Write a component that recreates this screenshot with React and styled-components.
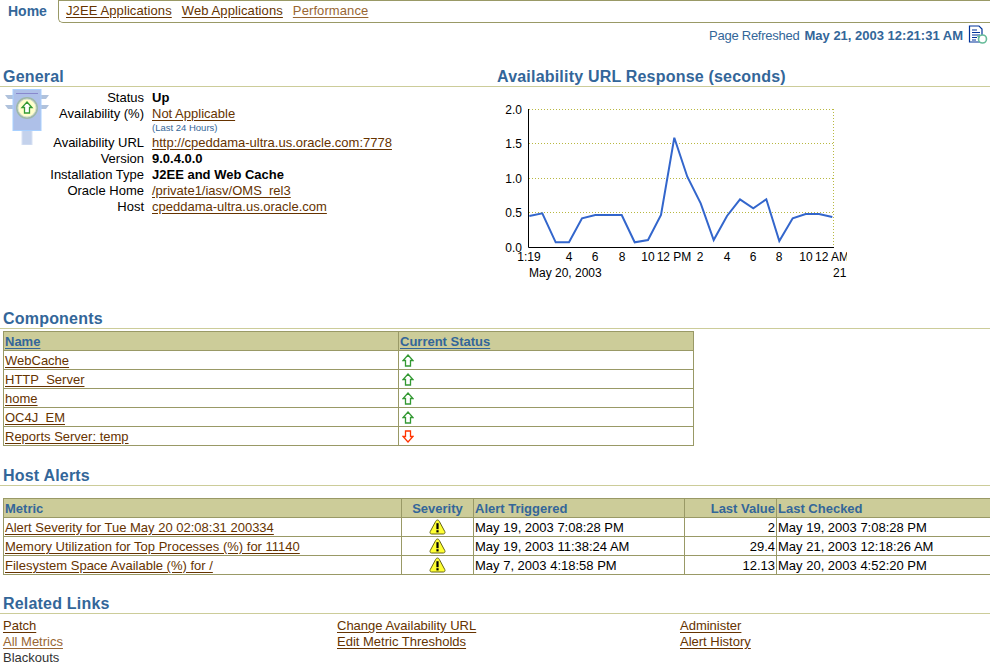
import React from "react";
import styled, { createGlobalStyle } from "styled-components";

const GlobalStyle = createGlobalStyle`
  html, body {
    margin: 0;
    padding: 0;
    background: #ffffff;
    overflow: hidden;
  }
  body {
    font-family: "Liberation Sans", Arial, sans-serif;
    font-size: 12px;
    color: #000000;
  }
`;

const responseData = [
  [118, 468], [157, 460], [197, 547], [237, 547], [276, 475], [316, 465],
  [355, 465], [395, 465], [434, 547], [474, 540], [513, 465], [553, 233],
  [592, 350], [632, 430], [671, 540], [711, 468], [750, 418], [790, 445],
  [829, 418], [868, 543], [908, 475], [947, 462], [987, 462], [1027, 471],
];

const yTicks = [
  ["2.0", 12],
  ["1.5", 46],
  ["1.0", 81],
  ["0.5", 115],
  ["0.0", 150],
];

const xTicks = [
  ["1:19", 32], ["4", 72], ["6", 98], ["8", 125], ["10", 151], ["12 PM", 177],
  ["2", 203], ["4", 230], ["6", 256], ["8", 282], ["10", 309], ["12 AM", 335],
];

const generalRows = [
  { label: "Status", value: "Up", bold: true },
  { label: "Availability (%)", value: "Not Applicable", link: true, note: "(Last 24 Hours)" },
  { label: "Availability URL", value: "http://cpeddama-ultra.us.oracle.com:7778", link: true },
  { label: "Version", value: "9.0.4.0.0", bold: true },
  { label: "Installation Type", value: "J2EE and Web Cache", bold: true },
  { label: "Oracle Home", value: "/private1/iasv/OMS_rel3", link: true },
  { label: "Host", value: "cpeddama-ultra.us.oracle.com", link: true },
];

const components = [
  { name: "WebCache", up: true },
  { name: "HTTP_Server", up: true },
  { name: "home", up: true },
  { name: "OC4J_EM", up: true },
  { name: "Reports Server: temp", up: false },
];

const alerts = [
  {
    metric: "Alert Severity for Tue May 20 02:08:31 200334",
    triggered: "May 19, 2003 7:08:28 PM",
    value: "2",
    checked: "May 19, 2003 7:08:28 PM",
  },
  {
    metric: "Memory Utilization for Top Processes (%) for 11140",
    triggered: "May 19, 2003 11:38:24 AM",
    value: "29.4",
    checked: "May 21, 2003 12:18:26 AM",
  },
  {
    metric: "Filesystem Space Available (%) for /",
    triggered: "May 7, 2003 4:18:58 PM",
    value: "12.13",
    checked: "May 20, 2003 4:52:20 PM",
  },
];

const Page = styled.div`
  width: 990px;
  height: 663px;
  overflow: hidden;
`;

const Nav = styled.div`
  display: flex;
  height: 23px;
`;

const HomeTab = styled.div`
  width: 58px;
  padding: 3px 0 0 8px;
  box-sizing: border-box;
  font-size: 14px;
  font-weight: bold;
  color: #336699;
`;

const TabStrip = styled.div`
  flex: 1;
  display: flex;
  gap: 10px;
  padding: 2px 0 0 7px;
  border: 1px solid #999966;
  border-right: 0;
  border-bottom-left-radius: 5px;
  a {
    letter-spacing: 0.1px;
  }
`;

const Link = styled.a`
  color: ${(p) => (p.$visited ? "#996633" : "#663300")};
  font-size: 13px;
  text-decoration: underline;
  text-underline-offset: 2px;
  white-space: nowrap;
`;

const RefreshRow = styled.div`
  display: flex;
  justify-content: flex-end;
  align-items: center;
  gap: 5px;
  height: 24px;
  padding-right: 2px;
  font-size: 13px;
  color: #336699;
`;

const RefreshLabel = styled.span`
  letter-spacing: -0.25px;
`;

const RefreshTime = styled.b`
  margin-left: 5px;
`;

const Columns = styled.div`
  display: grid;
  grid-template-columns: 494px 496px;
  margin-top: 21px;
`;

const SectionHead = styled.h2`
  margin: ${(p) => p.$top || 0}px 0 0;
  height: 18px;
  padding-left: 3px;
  border-bottom: 1px solid #cccc99;
  font-size: 16px;
  letter-spacing: 0.2px;
  line-height: 17px;
  font-weight: bold;
  color: #336699;
  white-space: nowrap;
`;

const GeneralBody = styled.div`
  display: flex;
  padding: 2px 0 0 4px;
`;

const StatusIcon = styled.svg`
  width: 46px;
  height: 56px;
  flex: none;
`;

const InfoList = styled.div`
  display: grid;
  grid-template-columns: 94px auto;
  column-gap: 8px;
  justify-content: start;
  align-content: start;
  margin-top: 1px;
`;

const InfoLabel = styled.div`
  grid-column: 1;
  height: 16px;
  line-height: 16px;
  font-size: 13px;
  text-align: right;
  white-space: nowrap;
`;

const InfoValue = styled.div`
  grid-column: 2;
  line-height: 16px;
  font-size: 13px;
  font-weight: ${(p) => (p.$bold ? "bold" : "normal")};
  white-space: nowrap;
`;

const Note = styled.div`
  height: 13px;
  line-height: 12px;
  font-size: 9.5px;
  color: #336699;
`;

const ChartSvg = styled.svg`
  display: block;
  width: 350px;
  height: 185px;
  margin: 13px 0 25px 3px;
  text {
    font-family: "Liberation Sans", Arial, sans-serif;
    font-size: 12px;
    fill: #000000;
  }
`;

const Table = styled.table`
  border-collapse: collapse;
  table-layout: fixed;
  width: ${(p) => p.$width}px;
  margin: ${(p) => p.$top}px 0 0 3px;
`;

const Col = styled.col`
  width: ${(p) => p.$width}px;
`;

const Th = styled.th`
  height: 19px;
  padding: 0 1px;
  box-sizing: border-box;
  border: 1px solid #999966;
  background: #cccc99;
  color: #336699;
  font-size: 13px;
  font-weight: bold;
  white-space: nowrap;
  text-align: ${(p) => p.$align || "left"};
  a {
    color: inherit;
    text-decoration: underline;
    text-underline-offset: 2px;
  }
`;

const Td = styled.td`
  height: 19px;
  padding: 0 1px;
  box-sizing: border-box;
  border: 1px solid #999966;
  font-size: 13px;
  white-space: nowrap;
  text-align: ${(p) => p.$align || "left"};
  svg {
    display: block;
    margin: ${(p) => (p.$align === "center" ? "0 auto" : "0 0 0 2px")};
  }
`;

const RelatedGrid = styled.div`
  display: grid;
  grid-template-columns: 334px 343px 1fr;
  padding: 4px 0 0 3px;
`;

const RelatedColumn = styled.div`
  display: flex;
  flex-direction: column;
  align-items: flex-start;
  line-height: 16px;
  font-size: 13px;
`;

const PlainItem = styled.span`
  color: #333333;
`;

const ArrowIcon = ({ up }) => (
  <svg width="12" height="13" viewBox="0 0 12 13">
    <path
      d={up ? "M6 1 L11 6.5 H8.5 V12 H3.5 V6.5 H1 Z" : "M6 12 L11 6.5 H8.5 V1 H3.5 V6.5 H1 Z"}
      fill="#ffffff"
      stroke={up ? "#339933" : "#ff3300"}
      strokeWidth="1.3"
    />
  </svg>
);

const WarningIcon = () => (
  <svg width="17" height="16" viewBox="0 0 17 16">
    <path d="M8.5 1 C9.5 1 10 1.8 10.5 2.7 L15.8 12.6 C16.4 14 15.6 15 14.4 15 H2.6 C1.4 15 .6 14 1.2 12.6 L6.5 2.7 C7 1.8 7.5 1 8.5 1 Z" fill="#ffff33" stroke="#66661a" strokeWidth="1" />
    <rect x="7.4" y="4.2" width="2.2" height="6" fill="#000000" />
    <rect x="7.4" y="11.2" width="2.2" height="2.2" fill="#000000" />
  </svg>
);

const RefreshIcon = () => (
  <svg width="20" height="20" viewBox="0 0 20 20">
    <path d="M1.5 1 H11 L14 4 V17 H1.5 Z" fill="#ffffff" stroke="#003399" strokeWidth="1.2" />
    <path d="M4 5 H9 M4 7.5 H12 M4 10 H12 M4 12.5 H9 M4 15 H8" stroke="#003399" strokeWidth="1.1" />
    <circle cx="14.5" cy="14" r="4" fill="#ffffff" stroke="#66bb99" strokeWidth="1.6" />
    <path d="M8.6 11 L11.8 10.2 L11.6 13.6 Z" fill="#66bb99" />
  </svg>
);

const TrafficLight = () => (
  <StatusIcon viewBox="0 0 46 56">
    <rect x="18" y="40" width="10" height="16" fill="#c4d2ec" stroke="#d8e2f4" />
    <path d="M1 6 H9 V10 H4 Z M1 16 H9 V20 H4 Z M45 6 H37 V10 H42 Z M45 16 H37 V20 H42 Z" fill="#b0c2dc" />
    <rect x="9" y="0.5" width="28" height="41" fill="#aec0e8" stroke="#a8d0ff" />
    <rect x="12" y="4" width="22" height="1" fill="#8888cc" />
    <circle cx="23" cy="19" r="11" fill="#9db8a8" />
    <circle cx="23" cy="19" r="9" fill="#ffffcc" stroke="#d8e0d0" />
    <path d="M23 13 L28 18.5 H25.5 V24 H20.5 V18.5 H18 Z" fill="#ffffff" stroke="#339933" strokeWidth="1.3" />
  </StatusIcon>
);

const ResponseChart = () => {
  const points = responseData
    .map(([x, y]) => `${(x / 3 - 7).toFixed(1)},${(y / 3 - 40).toFixed(1)}`)
    .join(" ");

  return (
    <ChartSvg viewBox="0 0 350 185">
      {yTicks.map(([label, y]) => (
        <g key={label}>
          <line x1="32" x2="336" y1={y - 2.5} y2={y - 2.5} stroke="#b8b840" strokeDasharray="1 2" />
          <text x="25" y={y + 2} textAnchor="end">{label}</text>
        </g>
      ))}
      <line x1="336.5" x2="336.5" y1="9" y2="147" stroke="#b8b840" strokeDasharray="1 2" />
      <polyline points={points} fill="none" stroke="#3366cc" strokeWidth="2" />
      <path d="M31.5 9 V147.5 H337" fill="none" stroke="#000000" />
      {xTicks.map(([label, x], i) => (
        <text key={i} x={x} y="161" textAnchor="middle">{label}</text>
      ))}
      <text x="32" y="177">May 20, 2003</text>
      <text x="336" y="177">21</text>
    </ChartSvg>
  );
};

const App = () => (
  <Page>
    <GlobalStyle />
    <Nav>
      <HomeTab>Home</HomeTab>
      <TabStrip>
        <Link href="#">J2EE Applications</Link>
        <Link href="#">Web Applications</Link>
        <Link href="#" $visited>Performance</Link>
      </TabStrip>
    </Nav>
    <RefreshRow>
      <span>
        <RefreshLabel>Page Refreshed</RefreshLabel>
        <RefreshTime>May 21, 2003 12:21:31 AM</RefreshTime>
      </span>
      <RefreshIcon />
    </RefreshRow>
    <Columns>
      <div>
        <SectionHead>General</SectionHead>
        <GeneralBody>
          <TrafficLight />
          <InfoList>
            {generalRows.map((row) => (
              <React.Fragment key={row.label}>
                <InfoLabel>{row.label}</InfoLabel>
                <InfoValue $bold={row.bold}>
                  {row.link ? <Link href="#">{row.value}</Link> : row.value}
                  {row.note && <Note>{row.note}</Note>}
                </InfoValue>
              </React.Fragment>
            ))}
          </InfoList>
        </GeneralBody>
      </div>
      <div>
        <SectionHead>Availability URL Response (seconds)</SectionHead>
        <ResponseChart />
      </div>
    </Columns>

    <SectionHead>Components</SectionHead>
    <Table $width={690} $top={2}>
      <colgroup>
        <Col $width={395} />
        <Col $width={295} />
      </colgroup>
      <thead>
        <tr>
          <Th><a href="#">Name</a></Th>
          <Th><a href="#">Current Status</a></Th>
        </tr>
      </thead>
      <tbody>
        {components.map((c) => (
          <tr key={c.name}>
            <Td><Link href="#">{c.name}</Link></Td>
            <Td><ArrowIcon up={c.up} /></Td>
          </tr>
        ))}
      </tbody>
    </Table>

    <SectionHead $top={21}>Host Alerts</SectionHead>
    <Table $width={987} $top={12}>
      <colgroup>
        <Col $width={398} />
        <Col $width={72} />
        <Col $width={211} />
        <Col $width={92} />
        <Col $width={214} />
      </colgroup>
      <thead>
        <tr>
          <Th>Metric</Th>
          <Th $align="center">Severity</Th>
          <Th>Alert Triggered</Th>
          <Th $align="right">Last Value</Th>
          <Th>Last Checked</Th>
        </tr>
      </thead>
      <tbody>
        {alerts.map((a) => (
          <tr key={a.metric}>
            <Td><Link href="#">{a.metric}</Link></Td>
            <Td $align="center"><WarningIcon /></Td>
            <Td>{a.triggered}</Td>
            <Td $align="right">{a.value}</Td>
            <Td>{a.checked}</Td>
          </tr>
        ))}
      </tbody>
    </Table>

    <SectionHead $top={20}>Related Links</SectionHead>
    <RelatedGrid>
      <RelatedColumn>
        <Link href="#">Patch</Link>
        <Link href="#" $visited>All Metrics</Link>
        <PlainItem>Blackouts</PlainItem>
      </RelatedColumn>
      <RelatedColumn>
        <Link href="#">Change Availability URL</Link>
        <Link href="#">Edit Metric Thresholds</Link>
      </RelatedColumn>
      <RelatedColumn>
        <Link href="#">Administer</Link>
        <Link href="#">Alert History</Link>
      </RelatedColumn>
    </RelatedGrid>
  </Page>
);

export default App;
